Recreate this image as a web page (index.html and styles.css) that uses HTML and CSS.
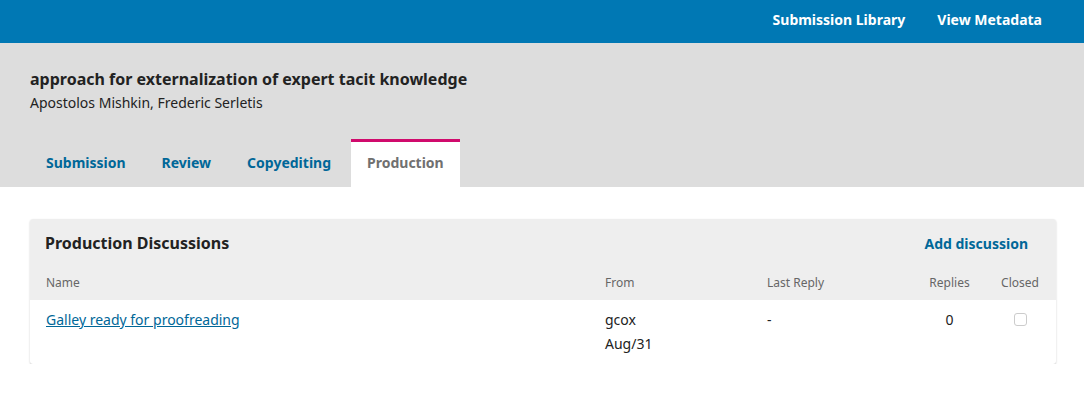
FILE: index.html
```html
<!DOCTYPE html>
<html lang="en">
<head>
<meta charset="utf-8">
<title>Production</title>
<link rel="stylesheet" href="styles.css">
</head>
<body>
<header class="topbar">
  <nav class="topbar-nav">
    <a class="topbar-link" href="#">Submission Library</a>
    <a class="topbar-link" href="#">View Metadata</a>
  </nav>
</header>
<section class="subhead">
  <h1 class="sub-title">approach for externalization of expert tacit knowledge</h1>
  <div class="sub-authors">Apostolos Mishkin, Frederic Serletis</div>
  <nav class="tabs">
    <a class="tab" href="#">Submission</a>
    <a class="tab" href="#">Review</a>
    <a class="tab" href="#">Copyediting</a>
    <a class="tab tab-active" href="#">Production</a>
  </nav>
</section>
<main class="content">
  <div class="panel">
    <div class="panel-head">
      <h2 class="panel-title">Production Discussions</h2>
      <a class="panel-action" href="#">Add discussion</a>
    </div>
    <div class="grid grid-head">
      <div class="cell">Name</div>
      <div class="cell">From</div>
      <div class="cell">Last Reply</div>
      <div class="cell center">Replies</div>
      <div class="cell center">Closed</div>
    </div>
    <div class="grid grid-row">
      <div class="cell"><a class="row-link" href="#">Galley ready for proofreading</a></div>
      <div class="cell">gcox<br>Aug/31</div>
      <div class="cell">-</div>
      <div class="cell center">0</div>
      <div class="cell center"><span class="checkbox"></span></div>
    </div>
  </div>
</main>
</body>
</html>
```
FILE: styles.css
```css
html, body {
  margin: 0;
  padding: 0;
  background: #fff;
  font-family: "Noto Sans", "Open Sans", sans-serif;
  color: #222;
}

a { text-decoration: none; }

.topbar {
  background: #0078b4;
  height: 43px;
  display: flex;
  align-items: center;
  justify-content: flex-end;
  padding: 0 42px 0 0;
}

.topbar-nav {
  display: flex;
  gap: 32px;
}

.topbar-link {
  color: #fff;
  font-size: 14px;
  font-weight: 700;
  line-height: 20px;
  margin-top: -3px;
}

.subhead {
  background: #ddd;
  padding: 24px 30px 0;
}

.sub-title {
  margin: 0;
  font-size: 16px;
  font-weight: 700;
  line-height: 24px;
  color: #222;
}

.sub-authors {
  font-size: 14px;
  line-height: 24px;
  color: #222;
}

.tabs {
  display: flex;
  gap: 4px;
  margin-top: 24px;
}

.tab {
  display: block;
  padding: 11px 16px 14px;
  border-top: 3px solid transparent;
  font-size: 14px;
  font-weight: 700;
  line-height: 20px;
  color: #006798;
}

.tab-active {
  background: #fff;
  border-top-color: #d00a6c;
  color: #707070;
}

.content {
  padding: 32px 28px 0 30px;
}

.panel {
  background: #fff;
  border-radius: 3px;
  box-shadow: 0 1px 2px rgba(0, 0, 0, 0.22);
  overflow: hidden;
}

.panel-head {
  background: #eee;
  display: flex;
  justify-content: space-between;
  align-items: center;
  height: 48px;
  box-sizing: border-box;
  padding: 0 28px 0 15px;
}

.panel-title {
  margin: 0;
  font-size: 16px;
  font-weight: 700;
  line-height: 24px;
  color: #222;
}

.panel-action {
  color: #006798;
  font-size: 14px;
  font-weight: 700;
  line-height: 24px;
  padding-top: 2px;
}

.grid {
  display: grid;
  grid-template-columns: 1fr 162px 132px 101px 40px;
  padding: 0 16px;
}

.grid-head {
  background: #eee;
  font-size: 12px;
  line-height: 20px;
  color: #666;
  padding-top: 6px;
  padding-bottom: 7px;
}

.grid-row {
  font-size: 14px;
  line-height: 24px;
  color: #222;
  padding-top: 8px;
  padding-bottom: 8px;
}

.center { text-align: center; }

.row-link {
  color: #006798;
  text-decoration: underline;
}

.checkbox {
  display: inline-block;
  width: 11px;
  height: 11px;
  border: 1px solid #ccc;
  border-radius: 3px;
  vertical-align: -1px;
  margin-top: 5px;
}
```
